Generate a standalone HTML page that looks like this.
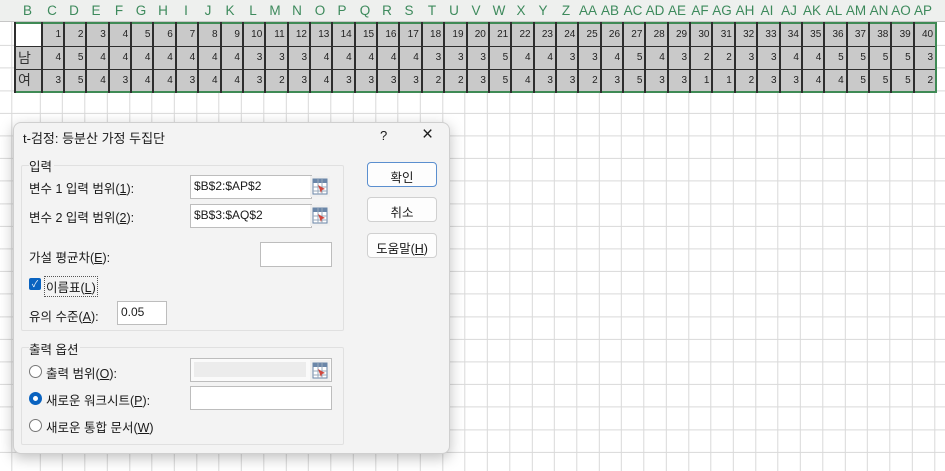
<!DOCTYPE html>
<html><head><meta charset="utf-8">
<style>
*{margin:0;padding:0;box-sizing:border-box}
body{width:945px;height:471px;overflow:hidden;background:#fff;position:relative;font-family:"Liberation Sans","Noto Sans CJK KR",sans-serif;
background-image:repeating-linear-gradient(to right,transparent 0,transparent 21.36px,#d9d9d9 21.36px,#d9d9d9 22.36px),repeating-linear-gradient(to bottom,transparent 0,transparent 21.6px,#d9d9d9 21.6px,#d9d9d9 22.6px);
background-position:18.3px 0,0 23.4px;}
.hdr{position:absolute;left:0;top:0;width:945px;height:22px;background:#eef0ee;border-bottom:1px solid #c6c6c6}
.hdr span{position:absolute;top:3px;text-align:center;color:#3d8a5c;font-size:13.5px}
table.d{position:absolute;left:14px;top:22px;border-collapse:collapse;table-layout:fixed;border:2px solid #3f8a55}
table.d td{height:23px;border:1px solid #2e2e2e;border-left:2px solid #2e2e2e;background:#c9c9c9;font-size:10px;text-align:right;padding-right:2px;color:#222;width:22.36px}
table.d td.l{width:26.7px;text-align:left;font-size:14px;padding-left:2px;color:#333}
table.d td.w{background:#fff}
.dlg{position:absolute;left:13px;top:122px;width:437px;height:332px;background:#f3f3f3;border:1px solid #cfcfcf;border-radius:8px;box-shadow:0 4px 14px rgba(0,0,0,.25);font-size:12.5px;color:#1a1a1a}
.a{position:absolute;white-space:nowrap}
.grp{position:absolute;border:1px solid #e0e0e0;border-radius:2px}
.in{position:absolute;background:#fff;border:1px solid #bdbdbd;font-size:12px;padding:3px 0 0 3px}
.btn{position:absolute;background:#fdfdfd;border:1px solid #d0d0d0;border-radius:4px;text-align:center;font-size:12.5px;padding-top:4px}
.rb{position:absolute;width:13px;height:13px;border:1px solid #777;border-radius:50%;background:#fff}
.ic{position:absolute;width:20px;height:21px;background:#f0f0f0}
u{text-decoration:underline}
</style></head><body>
<div class="hdr">
<span style="left:14px;width:27px">B</span><span style="left:41px;width:22px">C</span><span style="left:63px;width:22px">D</span><span style="left:85px;width:22px">E</span><span style="left:108px;width:22px">F</span><span style="left:130px;width:22px">G</span><span style="left:152px;width:22px">H</span><span style="left:175px;width:22px">I</span><span style="left:197px;width:22px">J</span><span style="left:219px;width:22px">K</span><span style="left:242px;width:22px">L</span><span style="left:264px;width:22px">M</span><span style="left:286px;width:22px">N</span><span style="left:309px;width:22px">O</span><span style="left:331px;width:22px">P</span><span style="left:354px;width:22px">Q</span><span style="left:376px;width:22px">R</span><span style="left:398px;width:22px">S</span><span style="left:421px;width:22px">T</span><span style="left:443px;width:22px">U</span><span style="left:465px;width:22px">V</span><span style="left:488px;width:22px">W</span><span style="left:510px;width:22px">X</span><span style="left:532px;width:22px">Y</span><span style="left:555px;width:22px">Z</span><span style="left:577px;width:22px">AA</span><span style="left:599px;width:22px">AB</span><span style="left:622px;width:22px">AC</span><span style="left:644px;width:22px">AD</span><span style="left:666px;width:22px">AE</span><span style="left:689px;width:22px">AF</span><span style="left:711px;width:22px">AG</span><span style="left:734px;width:22px">AH</span><span style="left:756px;width:22px">AI</span><span style="left:778px;width:22px">AJ</span><span style="left:801px;width:22px">AK</span><span style="left:823px;width:22px">AL</span><span style="left:845px;width:22px">AM</span><span style="left:868px;width:22px">AN</span><span style="left:890px;width:22px">AO</span><span style="left:912px;width:22px">AP</span>
</div>
<table class="d">
<tr><td class="l w"></td><td>1</td><td>2</td><td>3</td><td>4</td><td>5</td><td>6</td><td>7</td><td>8</td><td>9</td><td>10</td><td>11</td><td>12</td><td>13</td><td>14</td><td>15</td><td>16</td><td>17</td><td>18</td><td>19</td><td>20</td><td>21</td><td>22</td><td>23</td><td>24</td><td>25</td><td>26</td><td>27</td><td>28</td><td>29</td><td>30</td><td>31</td><td>32</td><td>33</td><td>34</td><td>35</td><td>36</td><td>37</td><td>38</td><td>39</td><td>40</td></tr>
<tr><td class="l">남</td><td>4</td><td>5</td><td>4</td><td>4</td><td>4</td><td>4</td><td>4</td><td>4</td><td>4</td><td>3</td><td>3</td><td>3</td><td>4</td><td>4</td><td>4</td><td>4</td><td>4</td><td>3</td><td>3</td><td>3</td><td>5</td><td>4</td><td>4</td><td>3</td><td>3</td><td>4</td><td>5</td><td>4</td><td>3</td><td>2</td><td>2</td><td>3</td><td>3</td><td>4</td><td>4</td><td>5</td><td>5</td><td>5</td><td>5</td><td>3</td></tr>
<tr><td class="l">여</td><td>3</td><td>5</td><td>4</td><td>3</td><td>4</td><td>4</td><td>3</td><td>4</td><td>4</td><td>3</td><td>2</td><td>3</td><td>4</td><td>3</td><td>3</td><td>3</td><td>3</td><td>2</td><td>2</td><td>3</td><td>5</td><td>4</td><td>3</td><td>3</td><td>2</td><td>3</td><td>5</td><td>3</td><td>3</td><td>1</td><td>1</td><td>2</td><td>3</td><td>3</td><td>4</td><td>4</td><td>5</td><td>5</td><td>5</td><td>2</td></tr>
</table>

<div class="dlg">
<div class="a" style="left:9px;top:5px;font-size:13px">t-검정: 등분산 가정 두집단</div>
<div class="a" style="left:366px;top:5px;font-size:13px">?</div>
<div class="a" style="left:408px;top:1px;font-size:19px;font-weight:300">×</div>

<div class="grp" style="left:7px;top:42px;width:323px;height:166px"></div>
<div class="a" style="left:15px;top:33px;background:#f3f3f3;padding-right:2px">입력</div>
<div class="a" style="left:15px;top:55px">변수 1 입력 범위(<u>1</u>):</div>
<div class="in" style="left:176px;top:52px;width:122px;height:24px">$B$2:$AP$2</div>
<div class="ic" style="left:296px;top:53px"><svg width="20" height="21"><rect x="3" y="3" width="14" height="15" fill="#fff" stroke="#6a86a8"/><rect x="3" y="3" width="14" height="4" fill="#6a86a8"/><path d="M3 11h14M3 15h14M8 3v15M12 3v15" stroke="#9ab" /><path d="M8 9l7 4-3 1-1 3z" fill="#d0463c"/></svg></div>
<div class="a" style="left:15px;top:84px">변수 2 입력 범위(<u>2</u>):</div>
<div class="in" style="left:176px;top:81px;width:122px;height:24px">$B$3:$AQ$2</div>
<div class="ic" style="left:296px;top:82px"><svg width="20" height="21"><rect x="3" y="3" width="14" height="15" fill="#fff" stroke="#6a86a8"/><rect x="3" y="3" width="14" height="4" fill="#6a86a8"/><path d="M3 11h14M3 15h14M8 3v15M12 3v15" stroke="#9ab" /><path d="M8 9l7 4-3 1-1 3z" fill="#d0463c"/></svg></div>
<div class="a" style="left:15px;top:124px">가설 평균차(<u>E</u>):</div>
<div class="in" style="left:246px;top:119px;width:72px;height:25px"></div>
<div class="a" style="left:15px;top:155px;width:12px;height:12px;background:#0a63c0;border-radius:2px;color:#fff;font-size:9px;text-align:center;line-height:12px">✓</div>
<div class="a" style="left:30px;top:153px;border:1px dotted #555;padding:0 1px">이름표(<u>L</u>)</div>
<div class="a" style="left:15px;top:183px">유의 수준(<u>A</u>):</div>
<div class="in" style="left:103px;top:178px;width:50px;height:24px">0.05</div>

<div class="grp" style="left:7px;top:224px;width:323px;height:98px"></div>
<div class="a" style="left:15px;top:216px;background:#f3f3f3;padding-right:2px">출력 옵션</div>
<div class="rb" style="left:15px;top:242px"></div>
<div class="a" style="left:32px;top:240px">출력 범위(<u>O</u>):</div>
<div class="in" style="left:176px;top:235px;width:142px;height:24px;background:#fafafa"><div style="position:absolute;left:3px;top:3px;width:112px;height:15px;background:#ececec"></div></div>
<div class="ic" style="left:296px;top:237px"><svg width="20" height="21"><rect x="3" y="3" width="14" height="15" fill="#fff" stroke="#6a86a8"/><rect x="3" y="3" width="14" height="4" fill="#6a86a8"/><path d="M3 11h14M3 15h14M8 3v15M12 3v15" stroke="#9ab" /><path d="M8 9l7 4-3 1-1 3z" fill="#d0463c"/></svg></div>
<div class="rb" style="left:15px;top:269px;border:4px solid #0a63c0"></div>
<div class="a" style="left:32px;top:267px">새로운 워크시트(<u>P</u>):</div>
<div class="in" style="left:176px;top:263px;width:142px;height:24px"></div>
<div class="rb" style="left:15px;top:296px"></div>
<div class="a" style="left:32px;top:294px">새로운 통합 문서(<u>W</u>)</div>

<div class="btn" style="left:353px;top:39px;width:70px;height:25px;border:1px solid #5b8fcf">확인</div>
<div class="btn" style="left:353px;top:74px;width:70px;height:25px">취소</div>
<div class="btn" style="left:353px;top:110px;width:70px;height:25px">도움말(<u>H</u>)</div>
</div>
</body></html>
